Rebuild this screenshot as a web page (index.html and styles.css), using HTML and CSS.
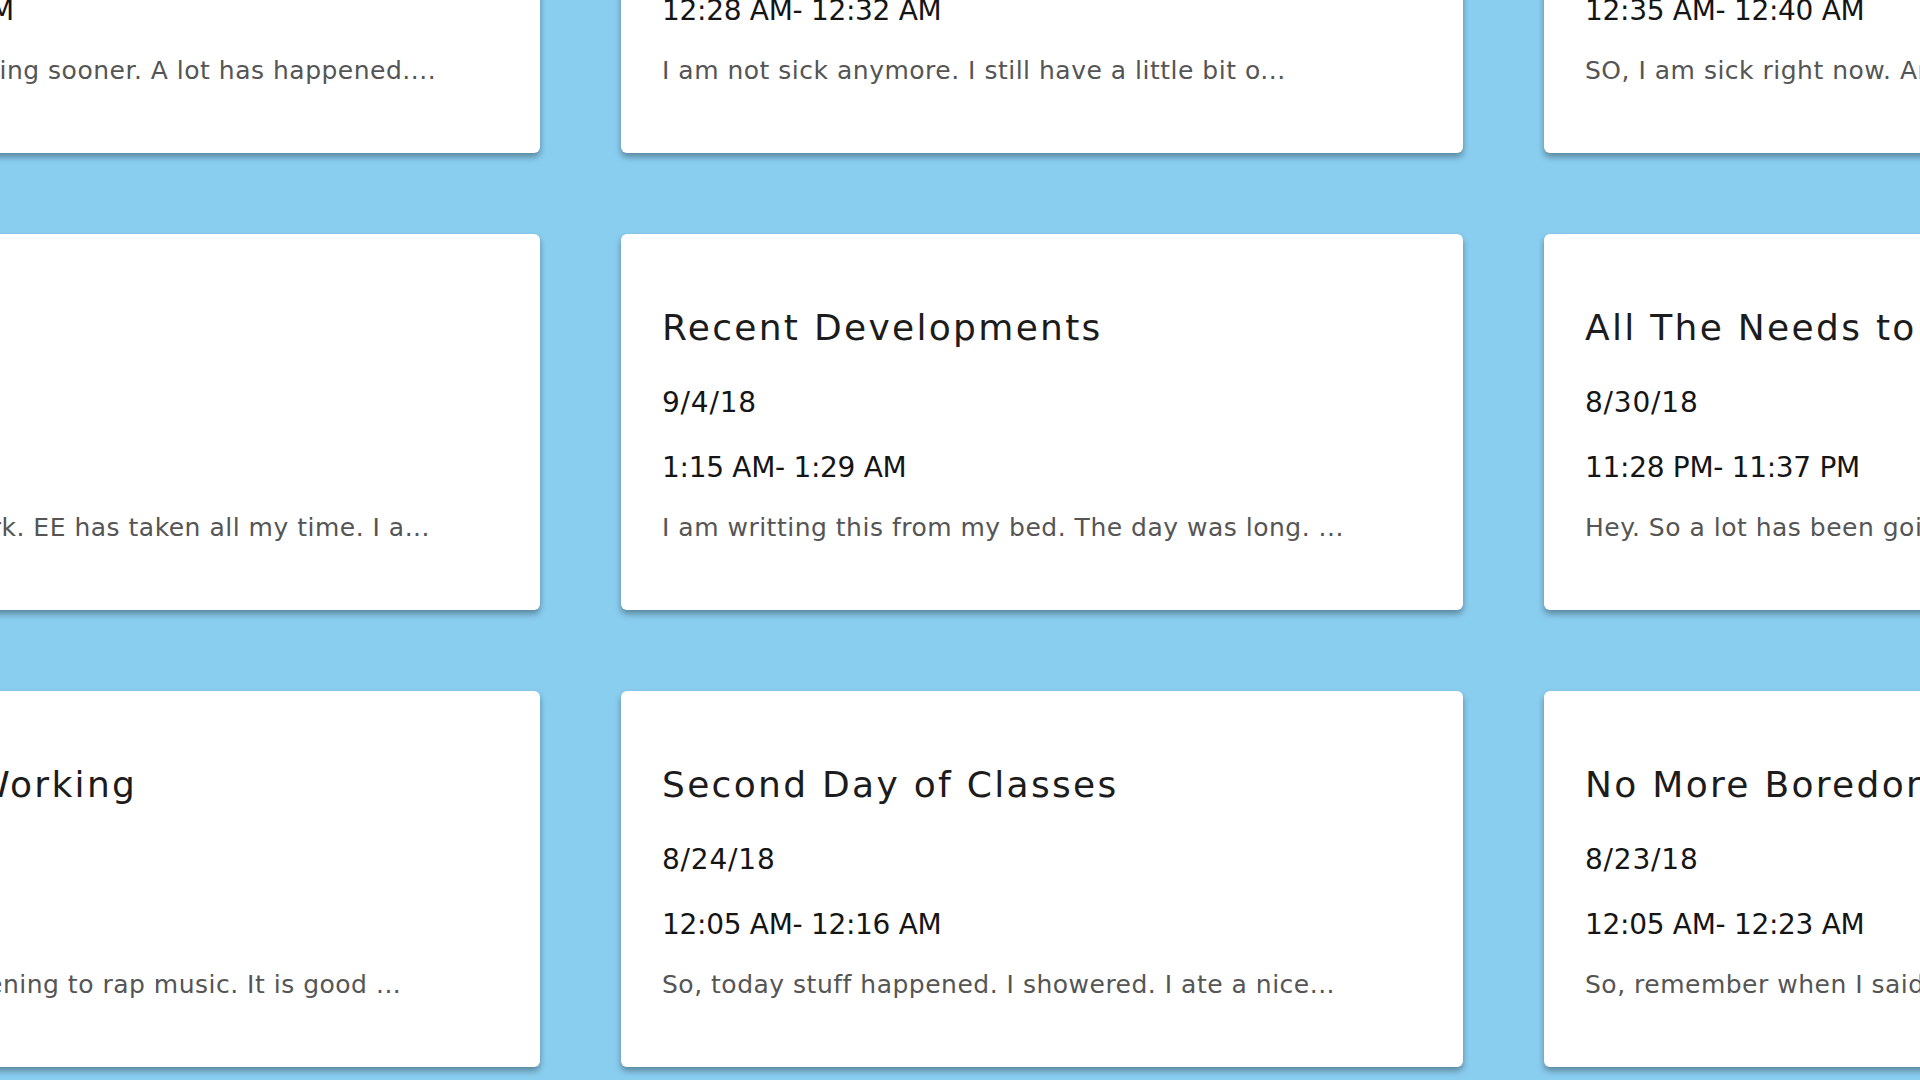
FILE: index.html
```html
<!DOCTYPE html>
<html lang="en">
<head>
<meta charset="utf-8">
<title>Journal</title>
<link rel="stylesheet" href="styles.css">
</head>
<body>
<main class="board">
  <article class="card">
    <h2 class="title">Catching Up</h2>
    <p class="date">9/10/18</p>
    <p class="time">11:02 PM- 11:20 PM</p>
    <p class="excerpt">Sorry about not writing sooner. A lot has happened....</p>
  </article>
  <article class="card">
    <h2 class="title">Feeling Better</h2>
    <p class="date">9/8/18</p>
    <p class="time">12:28 AM- 12:32 AM</p>
    <p class="excerpt">I am not sick anymore. I still have a little bit o...</p>
  </article>
  <article class="card">
    <h2 class="title">Sick Day</h2>
    <p class="date">9/6/18</p>
    <p class="time">12:35 AM- 12:40 AM</p>
    <p class="excerpt">SO, I am sick right now. And it is not fun at all. I...</p>
  </article>

  <article class="card">
    <h2 class="title">Busy</h2>
    <p class="date">9/5/18</p>
    <p class="time">1:02 AM</p>
    <p class="excerpt">Too much schoolwork. EE has taken all my time. I a...</p>
  </article>
  <article class="card">
    <h2 class="title">Recent Developments</h2>
    <p class="date">9/4/18</p>
    <p class="time">1:15 AM- 1:29 AM</p>
    <p class="excerpt">I am writting this from my bed. The day was long. ...</p>
  </article>
  <article class="card">
    <h2 class="title">All The Needs to Change</h2>
    <p class="date">8/30/18</p>
    <p class="time">11:28 PM- 11:37 PM</p>
    <p class="excerpt">Hey. So a lot has been going on lately. I have be...</p>
  </article>

  <article class="card">
    <h2 class="title">Jams While Working</h2>
    <p class="date">8/26/18</p>
    <p class="time">11:05 PM- 1:16 AM</p>
    <p class="excerpt">I am constantly listening to rap music. It is good ...</p>
  </article>
  <article class="card">
    <h2 class="title">Second Day of Classes</h2>
    <p class="date">8/24/18</p>
    <p class="time">12:05 AM- 12:16 AM</p>
    <p class="excerpt">So, today stuff happened. I showered. I ate a nice...</p>
  </article>
  <article class="card">
    <h2 class="title">No More Boredom</h2>
    <p class="date">8/23/18</p>
    <p class="time">12:05 AM- 12:23 AM</p>
    <p class="excerpt">So, remember when I said I was bored? Well, no mo...</p>
  </article>
</main>
</body>
</html>
```
FILE: styles.css
```css
html, body {
  margin: 0;
  padding: 0;
}

body {
  width: 1920px;
  height: 1080px;
  overflow: hidden;
  background: #89cdef;
  font-family: "DejaVu Sans", "Liberation Sans", sans-serif;
}

.board {
  display: grid;
  grid-template-columns: repeat(3, 842px);
  grid-auto-rows: 376px;
  column-gap: 81px;
  row-gap: 81px;
  margin-left: -302px;
  margin-top: -223px;
}

.card {
  background: #ffffff;
  border-radius: 6px;
  box-shadow: 0 4px 6px rgba(0, 0, 0, 0.34);
  padding: 72px 41px 0 41px;
  overflow: hidden;
  white-space: nowrap;
}

.title {
  margin: 0;
  font-size: 36px;
  line-height: 44px;
  font-weight: normal;
  letter-spacing: 2.3px;
  color: #1c1c1c;
}

.date,
.time {
  font-size: 28px;
  line-height: 36px;
  color: #151515;
  letter-spacing: -0.3px;
  margin: 0;
}

.date {
  margin-top: 35px;
  letter-spacing: 0.8px;
}

.time {
  margin-top: 29px;
}

.excerpt {
  margin: 27px 0 0 0;
  font-size: 25px;
  line-height: 30px;
  letter-spacing: 0.5px;
  color: #555555;
}
```
